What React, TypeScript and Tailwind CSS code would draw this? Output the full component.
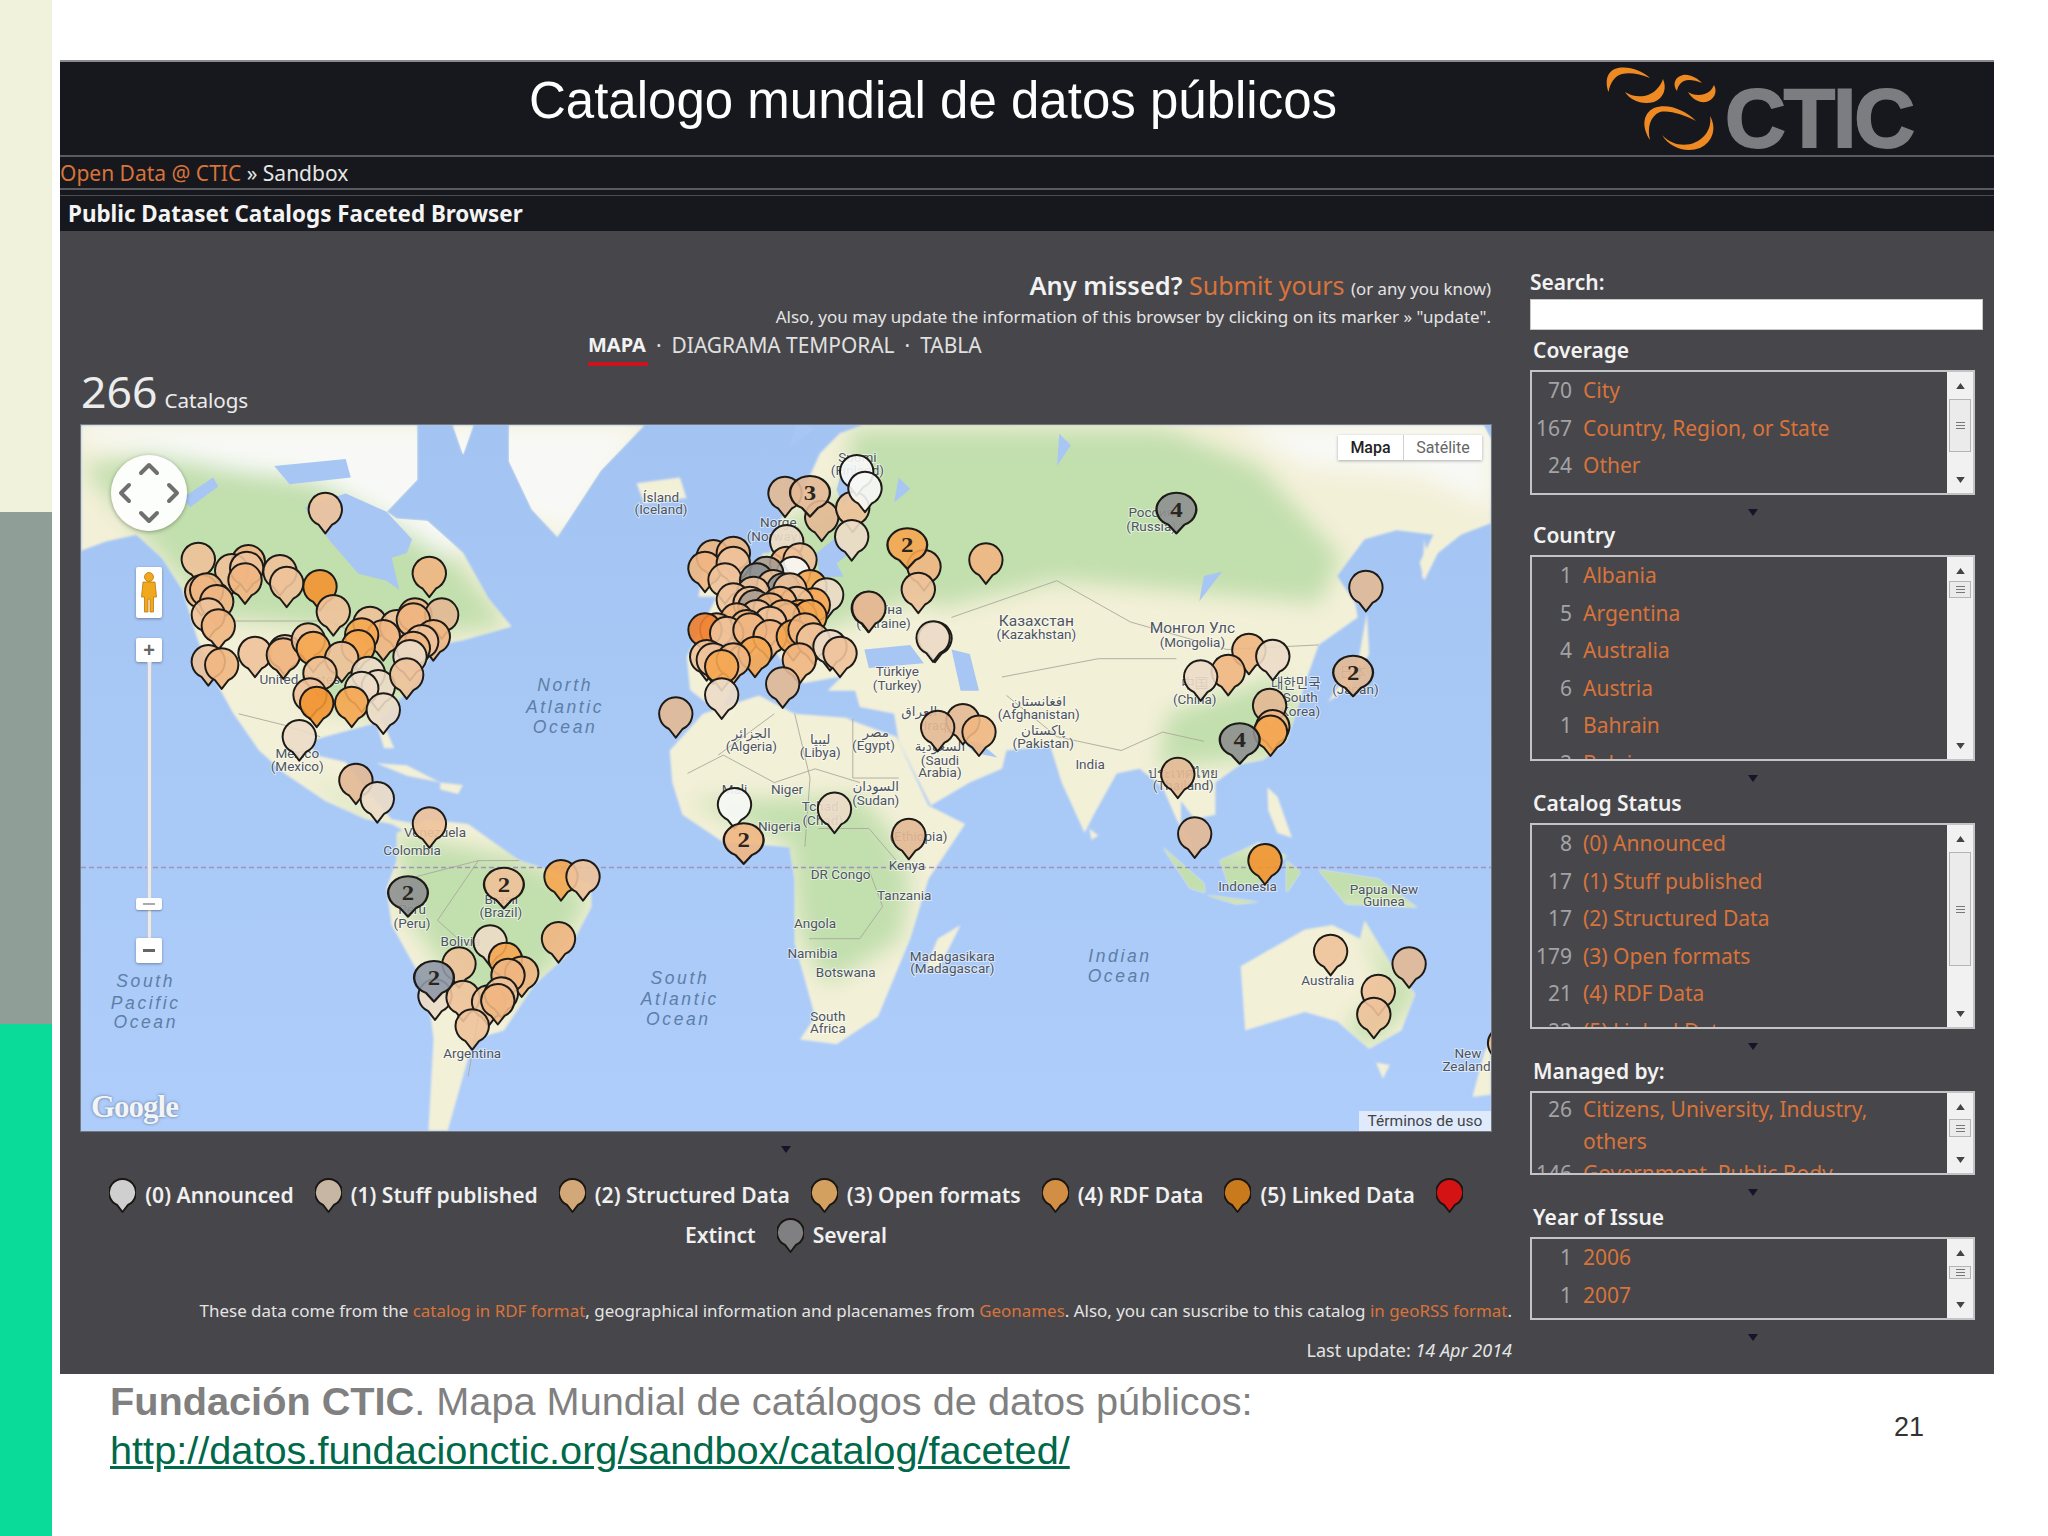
import React from "react";

type P = [number, number];
const Z3 = (a: number[][]): P[] => a.map(([x, y]) => [x * 0.5102 - 21, y * 0.459 - 5]);
const Z4 = (a: number[][]): P[] => a.map(([x, y]) => [x * 0.459 + 719, y * 0.459 - 5]);
const Z8 = (a: number[][]): P[] => a.map(([x, y]) => [589 + x / 3, 5 + y / 3]);
const Z9 = (a: number[][]): P[] => a.map(([x, y]) => [99 + x / 3, 115 + y / 3]);
const S = (p: P[]) => p.map(([x, y]) => `${x.toFixed(1)},${y.toFixed(1)}`).join(" ");

const LAND: string[] = [
  // North + Central America
  S(Z3([[42,12],[700,12],[700,130],[640,200],[660,215],[720,220],[790,290],[840,390],[885,450],[790,480],[740,490],[690,580],[630,650],[655,715],[635,715],[620,660],[520,690],[490,700],[500,730],[560,745],[590,790],[650,870],[700,880],[690,905],[650,880],[600,870],[520,830],[440,770],[390,720],[340,640],[300,560],[270,480],[240,370],[200,300],[150,250],[90,265],[42,285]])),
  S(Z3([[770,12],[810,12],[790,75]])),
  // Greenland
  S(Z3([[880,12],[1145,12],[1060,110],[975,255],[925,195],[880,90]])),
  // Iceland
  S(Z3([[1130,138],[1215,125],[1228,170],[1145,182]])),
  // South America
  S(Z3([[660,900],[720,870],[800,880],[900,960],[1040,1010],[1042,1060],[990,1170],[930,1230],[870,1330],[810,1350],[790,1430],[760,1548],[722,1548],[732,1350],[720,1240],[650,1100],[640,1020],[660,960]])),
  // Cuba, Hispaniola
  S(Z3([[620,748],[680,752],[745,790],[680,775]])),
  S(Z3([[745,790],[790,795],[780,815],[745,805]])),
  // Africa
  S([...Z3([[1200,790],[1195,720],[1260,640],[1370,600],[1440,640],[1560,650]]), ...Z4([[100,650],[210,690],[280,840],[360,880],[280,1000],[240,1130],[170,1300],[80,1360],[0,1350]]), ...Z3([[1480,1300],[1440,1140],[1440,1000],[1430,930],[1300,920],[1220,860]])]),
  // Madagascar
  S(Z4([[350,1100],[300,1200],[275,1190],[300,1130]])),
  // Eurasia
  S([...Z8([[300,370],[330,270],[400,180],[450,70],[510,10],[580,-15]]), ...Z4([[1490,12],[1505,40],[1505,225],[1440,250],[1390,290],[1360,350],[1350,310],[1380,250],[1300,240],[1230,260],[1170,340],[1210,400],[1215,430],[1130,490],[1105,560],[1080,640],[1060,700],[1010,740],[960,750],[905,790],[905,860],[860,870],[830,830],[830,900],[865,950],[820,870],[790,800],[740,760],[690,770],[640,860],[620,900],[570,790],[545,710],[450,720],[440,760],[370,790],[285,840],[215,700],[205,640],[130,625],[120,590],[60,590],[90,560]]), ...Z8([[510,740],[400,760],[340,700],[300,640],[220,700],[150,850],[60,780],[50,680],[90,600],[120,540],[150,480],[230,440],[280,370]])]),
  // UK
  S(Z8([[85,500],[100,420],[150,380],[170,330],[230,440],[190,500]])),
  // Japan
  S(Z4([[1235,420],[1240,510],[1200,580],[1150,615],[1170,585],[1215,530]])),
  // Sakhalin
  S(Z4([[1360,260],[1372,320],[1355,345]])),
  // Philippines
  S(Z4([[1018,800],[1040,820],[1072,910],[1040,900],[1020,850]])),
  // Sumatra, Borneo, Java, Sulawesi
  S(Z4([[790,930],[880,1010],[882,1030],[850,1020]])),
  S(Z4([[915,960],[1000,920],[1060,950],[1000,1010],[935,1015]])),
  S(Z4([[885,1035],[1000,1050],[950,1055]])),
  S(Z4([[1060,960],[1090,985],[1060,1030]])),
  // PNG
  S(Z4([[1130,980],[1260,1000],[1345,1062],[1190,1055]])),
  // Australia
  S(Z4([[960,1190],[1100,1110],[1160,1100],[1220,1130],[1230,1090],[1290,1190],[1340,1250],[1310,1330],[1240,1370],[1170,1310],[1100,1290],[970,1330]])),
  S(Z4([[1255,1400],[1285,1405],[1270,1435]])),
  // New Zealand
  S(Z4([[1490,1380],[1505,1350],[1505,1470],[1465,1475]])),
  // Sri Lanka
  S(Z4([[630,890],[650,905],[635,915]])),
];

const GREEN: string[] = [
  S(Z3([[42,100],[250,60],[700,200],[880,450],[700,470],[300,430],[200,300]])),
  S(Z3([[500,470],[720,480],[650,650],[480,620]])),
  S(Z3([[470,760],[660,890],[580,860]])),
  S(Z3([[660,900],[920,960],[1040,1040],[960,1200],[860,1280],[790,1250],[680,1080]])),
  S([...Z3([[1230,830],[1568,820]]), ...Z4([[200,900],[240,1000],[220,1130],[60,1230],[0,1130]]), ...Z3([[1430,920]])]),
  S(Z4([[110,20],[800,20],[1000,100],[1180,300],[1130,400],[800,370],[560,350],[300,410],[100,300]])),
  S(Z4([[780,760],[1050,730],[1090,620],[1040,560],[800,640]])),
  S(Z8([[300,300],[700,100],[760,500],[300,650]])),
  S(Z4([[780,920],[1360,960],[1360,1070],[780,1060]])),
  S(Z4([[1220,1090],[1350,1250],[1240,1370],[1190,1320],[1280,1240]])),
];

const WHITE: string[] = [
  S(Z3([[42,12],[1145,12],[1000,250],[860,190],[760,300],[660,230],[500,130],[350,110],[42,45]])),
  S(Z4([[950,10],[1505,10],[1505,190],[1350,120],[1100,100]])),
];

const WATER: string[] = [
  S(Z3([[480,190],[560,160],[640,200],[690,260],[680,290],[650,300],[665,370],[640,350],[585,335],[530,265]])),
  S(Z3([[420,100],[560,85],[570,125],[450,140]])),
  S(Z3([[240,170],[300,125],[310,145],[255,190]])),
  S(Z8([[440,370],[500,320],[540,370],[500,400],[520,440],[450,440]])),
  S(Z8([[520,100],[580,110],[590,160],[520,230],[500,180]])),
  S(Z4([[140,500],[240,490],[270,530],[150,540]])),
  S(Z4([[330,500],[370,510],[390,590],[350,590]])),
  S(Z4([[350,695],[395,705],[430,735],[380,725]])),
  S(Z4([[880,340],[920,330],[870,395]])),
  S(Z4([[215,125],[240,150],[205,180]])),
  S(Z4([[565,30],[590,55],[560,100]])),
  S(Z3([[1445,0],[1480,20],[1430,60]])),
];

const BORDERS: string[] = [
  S(Z3([[340,438],[525,438],[590,470]])),
  S(Z3([[350,640],[440,665],[510,690]])),
  S(Z3([[1230,770],[1300,730],[1400,790],[1480,760],[1568,790]])),
  S(Z3([[1290,730],[1400,640]])),
  S(Z3([[1440,640],[1470,780],[1460,930]])),
  S(Z4([[115,650],[115,780],[215,780]])),
  S(Z4([[20,1130],[130,1130],[180,1060],[150,980]])),
  S(Z4([[40,890],[150,890],[210,960]])),
  S(Z4([[330,430],[560,350],[720,440],[930,500],[1130,490]])),
  S(Z4([[440,560],[650,520],[820,520]])),
  S(Z4([[450,600],[560,690],[700,720],[790,680],[880,700]])),
  S(Z3([[820,960],[740,1090],[780,1130],[860,1180],[820,1300],[800,1430]])),
  S(Z3([[680,1000],[820,960],[900,960]])),
];

type M = [number, number, string, string?];
const tag = (pts: P[], c: string[]): M[] => pts.map((p, i) => [p[0], p[1], c[i] || "t"] as M);

const C: Record<string, string> = {
  t: "#efb682",
  l: "#eec29a",
  o: "#f5a650",
  d: "#f29330",
  r: "#f07f2e",
  p: "#ecdcc8",
  c: "#e3b995",
  w: "#f7f8f6",
  g: "#8e9090",
  b: "#8f98a6",
  s: "#a99c90",
};

const NA = tag(
  Z9([[55,58],[205,65],[155,92],[200,85],[195,120],[300,95],[320,130],[420,140],[460,215],[65,155],[80,150],[110,185],[85,225],[115,258],[225,340],[315,335],[310,345],[85,365],[125,375],[385,300],[400,325],[570,250],[650,260],[705,225],[785,225],[700,240],[610,290],[545,285],[535,320],[485,355],[760,290],[725,305],[700,325],[690,350],[565,400],[595,440],[545,445],[420,400],[390,465],[410,490],[515,490],[610,510],[680,405],[748,100],[358,590]]),
  ["l","t","l","l","t","l","l","d","l","t","t","t","l","t","l","l","t","l","t","l","o","l","l","t","c","t","t","o","o","l","t","l","t","p","p","p","p","l","l","d","o","p","l","t","p"]
);
const SA = tag(
  Z3([[520,195],[580,785],[622,825],[724,880],[982,995],[1025,995],[977,1130],[843,1137],[782,1185],[873,1175],[905,1205],[878,1210],[735,1255],[790,1258],[840,1268],[865,1250],[858,1265],[808,1320],[1207,640],[1322,838],[1518,848]]),
  ["l","c","p","l","o","l","t","p","l","o","t","t","p","l","l","l","t","l","c","w","p"]
);
const EU = tag(
  Z8([[345,190],[455,262],[548,235],[560,125],[585,175],[545,320],[350,335],[762,410],[745,478],[595,535],[795,625],[130,380],[190,370],[105,415],[190,400],[165,450],[350,400],[390,390],[370,430],[290,430],[260,450],[310,470],[420,470],[470,495],[340,480],[360,480],[250,490],[430,525],[380,520],[190,510],[330,520],[240,520],[255,530],[300,540],[260,560],[390,560],[360,570],[420,560],[340,560],[300,580],[200,570],[230,590],[140,600],[105,600],[170,610],[240,600],[300,620],[370,620],[405,600],[430,630],[480,650],[510,670],[110,680],[130,690],[255,670],[190,690],[155,710],[388,690],[338,762],[155,795]]),
  ["c","c","l","w","w","p","p","t","l","c","p","t","t","t","l","l","t","l","w","s","g","l","o","p","g","l","l","o","l","l","t","l","s","t","l","o","l","o","t","l","t","t","t","r","l","t","t","o","t","l","p","l","l","l","o","t","o","t","c","p"]
);
const AS = tag(
  Z4([[405,305],[1233,365],[290,475],[150,410],[355,655],[300,670],[390,680],[237,905],[978,502],[1030,515],[933,548],[873,560],[1023,622],[1030,668],[1025,680],[823,772],[860,902],[1013,960],[1156,1158],[1327,1185],[1260,1245],[1250,1295],[1535,1358]]),
  ["t","c","p","c","c","c","t","c","t","p","t","p","c","t","o","c","c","d","l","c","l","l","t"]
);
const CLUSTERS: M[] = [
  [...Z8([[420,188]])[0], "c", "3"],
  [...Z8([[712,345]])[0], "o", "2"],
  [...Z4([[820,195]])[0], "g", "4"],
  [...Z4([[958,697]])[0], "g", "4"],
  [...Z4([[1205,550]])[0], "c", "2"],
  [...Z3([[682,1030]])[0], "g", "2"],
  [...Z3([[870,1012]])[0], "l", "2"],
  [...Z3([[733,1215]])[0], "b", "2"],
  [...Z3([[1340,915]])[0], "t", "2"],
];

const PIN = "M-6.5 14.6A16 16 0 1 1 6.5 14.6L0 23Z";

type L = [P, string, ("o" | "s")?];
const LABELS: L[] = [
  ...([
    [1178,167,"Ísland"],[1178,193,"(Iceland)"],[1408,222,"Norge"],[1400,252,"(Norway)"],[470,565,"United States"],[465,725,"México"],[465,753,"(Mexico)"],[735,898,"Venezuela"],[690,937,"Colombia"],[690,1065,"Perú"],[690,1095,"(Peru)"],[865,1043,"Brasil"],[864,1071,"(Brazil)"],[785,1135,"Bolivia"],[808,1378,"Argentina"],[1355,682,"الجزائر"],[1355,711,"(Algeria)"],[1490,695,"ليبيا"],[1490,723,"(Libya)"],[1322,803,"Mali"],[1425,805,"Niger"],[1490,840,"Tchad"],[1495,872,"(Chad)"],[1410,885,"Nigeria"],[1530,990,"DR Congo"],[1480,1095,"Angola"],[1475,1162,"Namibia"],[1540,1202,"Botswana"],[1505,1298,"South"],[1505,1325,"Africa"],
  ] as [number, number, string][]).map(([x, y, t]) => [Z3([[x, y]])[0], t] as L),
  ...([
    [125,80,"Suomi"],[125,110,"(Finland)"],[170,412,"Україна"],[182,443,"(Ukraine)"],[212,547,"Türkiye"],[212,577,"(Turkey)"],[515,437,"Казахстан"],[515,466,"(Kazakhstan)"],[855,453,"Монгол Улс"],[855,484,"(Mongolia)"],[765,200,"Россия"],[765,230,"(Russia)"],[860,572,"中国"],[860,607,"(China)"],[1080,573,"대한민국"],[1090,603,"South"],[1090,633,"Korea)"],[1205,550,"日本"],[1210,585,"(Japan)"],[520,612,"افغانستان"],[520,640,"(Afghanistan)"],[530,675,"پاکستان"],[530,703,"(Pakistan)"],[632,750,"India"],[835,768,"ประเทศไทย"],[835,795,"(Thailand)"],[165,680,"مصر"],[160,708,"(Egypt)"],[305,710,"السعودية"],[305,740,"(Saudi"],[305,767,"Arabia)"],[165,798,"السودان"],[165,827,"(Sudan)"],[258,907,"(Ethiopia)"],[233,970,"Kenya"],[227,1034,"Tanzania"],[332,1167,"Madagasikara"],[332,1194,"(Madagascar)"],[975,1015,"Indonesia"],[1272,1021,"Papua New"],[1272,1048,"Guinea"],[1150,1220,"Australia"],[1455,1378,"New"],[1452,1408,"Zealand"],[260,635,"العراق"],[295,665,"(Iraq)"],
  ] as [number, number, string][]).map(([x, y, t]) => [Z4([[x, y]])[0], t] as L),
  ...([
    [990,578,"North"],[990,625,"Atlantic"],[990,668,"Ocean"],[168,1222,"South"],[168,1270,"Pacific"],[168,1312,"Ocean"],[1215,1215,"South"],[1215,1262,"Atlantic"],[1212,1305,"Ocean"],
  ] as [number, number, string][]).map(([x, y, t]) => [Z3([[x, y]])[0], t, "o"] as L),
  [Z4([[697,1168]])[0], "Indian", "o"],
  [Z4([[697,1212]])[0], "Ocean", "o"],
];

const LARGE = ["Казахстан", "Монгол Улс"];

function Marker({ m }: { m: M }) {
  const [x, y, c, n] = m;
  const big = !!n;
  return (
    <g transform={`translate(${x.toFixed(1)} ${y.toFixed(1)}) scale(${big ? 1.24 : 1.04} ${big ? 1.04 : 1.04})`}>
      <path d={PIN} fill={C[c]} fillOpacity={0.9} stroke="#1d1b18" strokeWidth={1.9} strokeLinejoin="round" />
      {n ? (
        <text x={0} y={7} textAnchor="middle" fontFamily="'Liberation Serif', serif" fontWeight={700} fontSize={20} fill="#2a2520">
          {n}
        </text>
      ) : null}
    </g>
  );
}

function WorldMap() {
  return (
    <svg viewBox="0 0 1410 706" className="block w-[1410px] h-[706px]">
      <defs>
        <linearGradient id="sea" x1="0" y1="0" x2="0" y2="1">
          <stop offset="0" stopColor="#a3c4f2" />
          <stop offset="1" stopColor="#aecdfb" />
        </linearGradient>
        <filter id="soft" x="-10%" y="-10%" width="120%" height="120%">
          <feGaussianBlur stdDeviation="11" />
        </filter>
        <filter id="edge" x="-2%" y="-2%" width="104%" height="104%">
          <feGaussianBlur stdDeviation="0.8" />
        </filter>
        <clipPath id="land">
          {LAND.map((p, i) => (
            <polygon key={i} points={p} />
          ))}
        </clipPath>
      </defs>
      <rect width="1410" height="706" fill="url(#sea)" />
      <g filter="url(#edge)">
        {LAND.map((p, i) => (
          <polygon key={i} points={p} fill="#f3f0d8" />
        ))}
      </g>
      <g clipPath="url(#land)">
        <g filter="url(#soft)">
          {GREEN.map((p, i) => (
            <polygon key={i} points={p} fill="#c2dfae" />
          ))}
          {WHITE.map((p, i) => (
            <polygon key={i} points={p} fill="#f8f9f6" />
          ))}
        </g>
      </g>
      {WATER.map((p, i) => (
        <polygon key={i} points={p} fill="#a7c6f3" />
      ))}
      {BORDERS.map((p, i) => (
        <polyline key={i} points={p} fill="none" stroke="#a9a99c" strokeWidth={0.9} />
      ))}
      <line x1="0" y1="442.5" x2="1410" y2="442.5" stroke="#a592b8" strokeWidth={1.6} strokeDasharray="5 3" />
      {LABELS.map(([p, t, k], i) =>
        k === "o" ? (
          <text key={i} x={p[0]} y={p[1] + 6} textAnchor="middle" fontFamily="'Liberation Sans', sans-serif" fontStyle="italic" fontSize={17.5} letterSpacing={2.6} fill="#5d7ea6">
            {t}
          </text>
        ) : (
          <text key={i} x={p[0]} y={p[1] + 5} textAnchor="middle" fontFamily="Roboto, 'DejaVu Sans', 'Noto Sans CJK KR', sans-serif" fontSize={LARGE.includes(t) ? 15.5 : 13.5} fill="#4d5560" stroke="#ffffff" strokeOpacity={0.55} strokeWidth={2} paintOrder="stroke">
            {t}
          </text>
        )
      )}
      {[...NA, ...SA, ...EU, ...AS].map((m, i) => (
        <Marker key={i} m={m} />
      ))}
      {CLUSTERS.map((m, i) => (
        <Marker key={i} m={m} />
      ))}
    </svg>
  );
}

function Chevrons() {
  return (
    <svg viewBox="0 0 76 76" className="w-[76px] h-[76px]" fill="none" stroke="#6f6f6f" strokeWidth={4} strokeLinecap="round" strokeLinejoin="round">
      <path d="M30 18L38 10L46 18" />
      <path d="M30 58L38 66L46 58" />
      <path d="M18 30L10 38L18 46" />
      <path d="M58 30L66 38L58 46" />
    </svg>
  );
}

function Pegman() {
  return (
    <svg viewBox="0 0 26 50" className="w-[26px] h-[50px]">
      <circle cx="13" cy="10" r="4.5" fill="#f2a81d" stroke="#b87a10" strokeWidth={0.8} />
      <path d="M7 15H19L20.5 30H17.5V45H14V32H12V45H8.5V30H5.5Z" fill="#f2a81d" stroke="#b87a10" strokeWidth={0.8} />
    </svg>
  );
}

function MapBox() {
  return (
    <div className="relative w-[1410px] h-[706px] overflow-hidden shadow-[0_0_0_1px_#77787c]">
      <WorldMap />
      <div className="absolute left-[30px] top-[30px] w-[76px] h-[76px] rounded-full bg-white/95 shadow-[0_1px_4px_rgba(0,0,0,0.35)]">
        <Chevrons />
      </div>
      <div className="absolute left-[55px] top-[142px] w-[26px] h-[51px] bg-white rounded-[2px] shadow-[0_1px_3px_rgba(0,0,0,0.35)]">
        <Pegman />
      </div>
      <div className="absolute left-[55px] top-[213px] w-[26px] flex flex-col items-center">
        <div className="w-[26px] h-[24px] bg-white rounded-[2px] shadow-[0_1px_3px_rgba(0,0,0,0.35)] flex items-center justify-center font-['Liberation_Sans',sans-serif] font-bold text-[20px] leading-none text-[#666]">+</div>
        <div className="w-[5px] h-[276px] bg-[#e8ecf2] border-x border-[#c4c8ce]"></div>
        <div className="absolute top-[260px] w-[26px] h-[12px] bg-white rounded-[2px] shadow-[0_1px_2px_rgba(0,0,0,0.35)] flex items-center justify-center">
          <div className="w-[12px] h-[2px] bg-[#aaa]"></div>
        </div>
        <div className="w-[26px] h-[25px] bg-white rounded-[2px] shadow-[0_1px_3px_rgba(0,0,0,0.35)] flex items-center justify-center">
          <div className="w-[12px] h-[3px] bg-[#666]"></div>
        </div>
      </div>
      <div className="absolute left-[1257px] top-[10px] w-[144px] h-[25px] bg-white shadow-[0_1px_3px_rgba(0,0,0,0.3)] flex font-['Roboto',sans-serif] text-[16px] leading-[25px]">
        <div className="w-[66px] text-center font-medium text-[#222] border-r border-[#d0d0d0]">Mapa</div>
        <div className="flex-1 text-center text-[#666]">Satélite</div>
      </div>
      <div className="absolute right-0 bottom-0 w-[132px] h-[20px] bg-white/60 text-center font-['Roboto',sans-serif] text-[15.5px] leading-[20px] text-[#444]">Términos de uso</div>
      <div className="absolute left-[10px] top-[665px] font-['Liberation_Serif',serif] font-bold text-[31px] leading-[34px] tracking-[-1px] text-[#f2f4f6] [text-shadow:0_0_3px_rgba(60,70,90,0.7)]">Google</div>
    </div>
  );
}

function CticLogo() {
  return (
    <div className="flex items-start">
      <svg viewBox="5 2 115 94" className="w-[115px] h-[94px]" fill="#ef8a22">
        <path d="M8.5 32C4 20 8 10 18 8C30 6 42 11 50 18C40 14 30 12 22 14C14 16 10 24 8.5 32Z" />
        <path d="M25 32C34 38 48 38 56 30C60 26 62 22 63 19C67 28 64 38 54 42C42 45 31 41 25 32Z" />
        <path d="M77 31C72 24 75 17 83 15C90 14 97 18 102 23C95 20 88 19 84 21C80 23 78 26 77 31Z" />
        <path d="M88 32C94 36 104 36 110 31C112 29 113 27 114 25C118 32 114 40 106 42C99 43 92 39 88 32Z" />
        <path d="M50 80C42 68 42 54 54 48C68 43 85 50 96 61C84 55 70 50 60 52C50 56 47 68 50 80Z" />
        <path d="M62 75C74 88 94 88 105 75C110 69 111 62 110 56C117 68 113 82 100 88C86 93 70 88 62 75Z" />
      </svg>
      <div className="ml-[5px] mt-[13px] font-['Liberation_Sans',sans-serif] font-bold text-[84px] leading-[86px] tracking-[-2px] text-[#7c7d80] [-webkit-text-stroke:2px_#7c7d80]">CTIC</div>
    </div>
  );
}

function LegendPin({ color, edge = "#1b1612" }: { color: string; edge?: string }) {
  return (
    <svg viewBox="-16 -17 32 41" className="w-[27px] h-[35px] shrink-0">
      <path d={PIN} fill={color} stroke={edge} strokeWidth={2.2} strokeLinejoin="round" />
    </svg>
  );
}

function Legend({ color, text }: { color: string; text: string }) {
  return (
    <div className="flex items-center gap-[9px]">
      <LegendPin color={color} />
      {text ? <span>{text}</span> : null}
    </div>
  );
}

function Triangle({ h = 26, top = 14 }: { h?: number; top?: number }) {
  return (
    <div className="flex justify-center" style={{ height: h }}>
      <svg viewBox="0 0 10 7" className="w-[10px] h-[7px]" style={{ marginTop: top }}>
        <path d="M0 0H10L5 7Z" fill="#14142a" />
      </svg>
    </div>
  );
}

function ScrollArrow({ down }: { down?: boolean }) {
  return (
    <svg viewBox="0 0 10 7" className="w-[9px] h-[6px]">
      <path d={down ? "M0 0H10L5 7Z" : "M0 7H10L5 0Z"} fill="#444" />
    </svg>
  );
}

type Row = [string, string];

function Facet({ title, rows, height, thumbTop, thumbH, wrapped, gap = 0 }: { title: string; rows: Row[]; height: number; thumbTop: number; thumbH: number; wrapped?: boolean; gap?: number }) {
  return (
    <div className="w-[445px]" style={{ marginTop: gap }}>
      <div className="h-[28px] leading-[28px] pl-[3px] text-[21px] font-semibold text-[#f2f2f2] whitespace-nowrap">{title}</div>
      <div className="mt-[6px] border-2 border-[#c4c4c6] flex overflow-hidden" style={{ height }}>
        <div className="flex-1 overflow-hidden">
          {rows.map(([n, t], i) => (
            <div key={i} className={`flex gap-[11px] text-[21px] ${wrapped ? "leading-[32px]" : "leading-[37.5px]"}`}>
              <span className="w-[40px] shrink-0 text-right text-[#a3a3a6]">{n}</span>
              <span className="text-[#d9733a] pr-[40px]">{t}</span>
            </div>
          ))}
        </div>
        <div className="w-[26px] shrink-0 bg-[#f1f1f1] flex flex-col items-center">
          <div className="h-[27px] flex items-center">
            <ScrollArrow />
          </div>
          <div className="w-[22px] bg-[#ebebeb] border border-[#b4b4b4] flex flex-col items-center justify-center gap-[2px]" style={{ height: thumbH, marginTop: thumbTop - 27 }}>
            <div className="w-[9px] h-[1px] bg-[#777]"></div>
            <div className="w-[9px] h-[1px] bg-[#777]"></div>
            <div className="w-[9px] h-[1px] bg-[#777]"></div>
          </div>
          <div className="flex-1"></div>
          <div className="h-[27px] flex items-center">
            <ScrollArrow down />
          </div>
        </div>
      </div>
      <Triangle />
    </div>
  );
}

const SANS = "font-['Noto_Sans',sans-serif]";

export default function App() {
  return (
    <div className={`w-[2048px] h-[1536px] bg-white flex overflow-hidden ${SANS}`}>
      <div className="w-[52px] shrink-0 flex flex-col">
        <div className="h-[512px] bg-[#f1f2dc]"></div>
        <div className="h-[512px] bg-[#8f9e96]"></div>
        <div className="h-[512px] bg-[#0bdb98]"></div>
      </div>
      <div className="w-[1996px] pl-[8px] pt-[60px]">
        <div className="w-[1934px] h-[1314px] bg-[#47474b] flex flex-col">
          <div className="h-[95px] bg-[#17181d] border-t-2 border-[#8a8b90] flex items-start">
            <div className="w-[1545px] shrink-0 pl-[469px] pt-[9px] font-['Liberation_Sans',sans-serif] text-[51px] leading-[60px] text-white whitespace-nowrap">Catalogo mundial de datos públicos</div>
            <CticLogo />
          </div>
          <div className="h-[2px] bg-[#5a5b60]"></div>
          <div className="h-[31px] bg-[#17181d] text-[21px] leading-[33px] whitespace-nowrap overflow-hidden">
            <span className="text-[#d9733a]">Open Data @ CTIC</span>
            <span className="text-[#e6e6e6]"> » Sandbox</span>
          </div>
          <div className="h-[2px] bg-[#5a5b60]"></div>
          <div className="h-[5px] bg-[#17181d]"></div>
          <div className="h-[1px] bg-[#4a4b50]"></div>
          <div className="h-[35px] bg-[#17181d] pl-[8px] text-[22.4px] leading-[35px] font-bold text-[#f4f4f4] whitespace-nowrap">Public Dataset Catalogs Faceted Browser</div>

          <div className="flex-1 flex">
            <div className="w-[1470px] pl-[21px]">
              <div className="w-[1410px] pt-[37px] text-right">
                <div className="h-[34px] leading-[34px] whitespace-nowrap">
                  <span className="text-[25.4px] font-semibold text-[#f2f2f2]">Any missed? </span>
                  <span className="text-[25px] text-[#d9733a]">Submit yours </span>
                  <span className="text-[16.8px] text-[#e4e4e4]">(or any you know)</span>
                </div>
                <div className="mt-[2px] h-[26px] leading-[26px] text-[17px] text-[#e4e4e4] whitespace-nowrap">Also, you may update the information of this browser by clicking on its marker » "update".</div>
              </div>
              <div className="mt-[2px] pl-[507px] h-[26px] leading-[26px] flex gap-[10px] text-[20.9px] text-[#e0e0e0] whitespace-nowrap">
                <span className="font-bold text-[#f2f2f2] text-[20px]">MAPA</span>
                <span>·</span>
                <span>DIAGRAMA TEMPORAL</span>
                <span>·</span>
                <span>TABLA</span>
              </div>
              <div className="ml-[507px] mt-[4px] w-[60px] h-[4px] bg-[#c8141e]"></div>
              <div className="h-[59px] flex items-baseline text-[#ececec]">
                <span className="text-[44.5px] leading-[50px]">266</span>
                <span className="ml-[7px] text-[20.6px]">Catalogs</span>
              </div>
              <MapBox />
              <div className="w-[1410px]">
                <Triangle h={44} top={15} />
                <div className="flex justify-center gap-[21px] h-[40px] items-center text-[21.1px] font-semibold text-[#f0f0f0] whitespace-nowrap">
                  <Legend color="#cfcfcf" text="(0) Announced" />
                  <Legend color="#c6b6a3" text="(1) Stuff published" />
                  <Legend color="#d2a878" text="(2) Structured Data" />
                  <Legend color="#d4a060" text="(3) Open formats" />
                  <Legend color="#d08f45" text="(4) RDF Data" />
                  <Legend color="#c87a1c" text="(5) Linked Data" />
                  <Legend color="#d41414" text="" />
                </div>
                <div className="flex justify-center items-center gap-[21px] h-[40px] text-[21.1px] font-semibold text-[#f0f0f0]">
                  <span>Extinct</span>
                  <Legend color="#808083" text="Several" />
                </div>
              </div>
              <div className="w-[1431px] mt-[43px] h-[26px] leading-[26px] text-right text-[16.95px] text-[#e4e4e4] whitespace-nowrap">
                These data come from the <span className="text-[#d9733a]">catalog in RDF format</span>, geographical information and placenames from <span className="text-[#d9733a]">Geonames</span>. Also, you can suscribe to this catalog <span className="text-[#d9733a]">in geoRSS format</span>.
              </div>
              <div className="w-[1431px] mt-[13px] h-[26px] leading-[26px] text-right text-[18px] text-[#e4e4e4]">
                Last update: <em>14 Apr 2014</em>
              </div>
            </div>

            <div className="w-[453px] pt-[37px]">
              <div className="h-[28px] leading-[28px] text-[21px] font-semibold text-[#f2f2f2]">Search:</div>
              <div className="mt-[3px] h-[31px] bg-white border border-[#c8c8c8]"></div>
              <div className="mt-[6px]">
                <Facet title="Coverage" height={125} thumbTop={27} thumbH={53} rows={[["70", "City"], ["167", "Country, Region, or State"], ["24", "Other"]]} />
                <Facet title="Country" height={206} thumbTop={24} thumbH={17} rows={[["1", "Albania"], ["5", "Argentina"], ["4", "Australia"], ["6", "Austria"], ["1", "Bahrain"], ["2", "Belgium"]]} />
                <Facet title="Catalog Status" gap={2} height={206} thumbTop={27} thumbH={114} rows={[["8", "(0) Announced"], ["17", "(1) Stuff published"], ["17", "(2) Structured Data"], ["179", "(3) Open formats"], ["21", "(4) RDF Data"], ["22", "(5) Linked Data"]]} />
                <Facet title="Managed by:" gap={2} height={84} thumbTop={26} thumbH={18} wrapped rows={[["26", "Citizens, University, Industry, others"], ["146", "Government, Public Body"]]} />
                <Facet title="Year of Issue" gap={2} height={83} thumbTop={27} thumbH={13} rows={[["1", "2006"], ["1", "2007"]]} />
              </div>
            </div>
          </div>
        </div>
        <div className="flex font-['Liberation_Sans',sans-serif]">
          <div className="w-[1834px] pl-[50px] pt-[3px] text-[39.7px] leading-[49px] text-[#808080]">
            <div className="whitespace-nowrap">
              <b>Fundación CTIC</b>. Mapa Mundial de catálogos de datos públicos:
            </div>
            <div className="whitespace-nowrap text-[#00694a] underline">http://datos.fundacionctic.org/sandbox/catalog/faceted/</div>
          </div>
          <div className="pt-[36px] text-[27px] leading-[34px] text-[#333]">21</div>
        </div>
      </div>
    </div>
  );
}
